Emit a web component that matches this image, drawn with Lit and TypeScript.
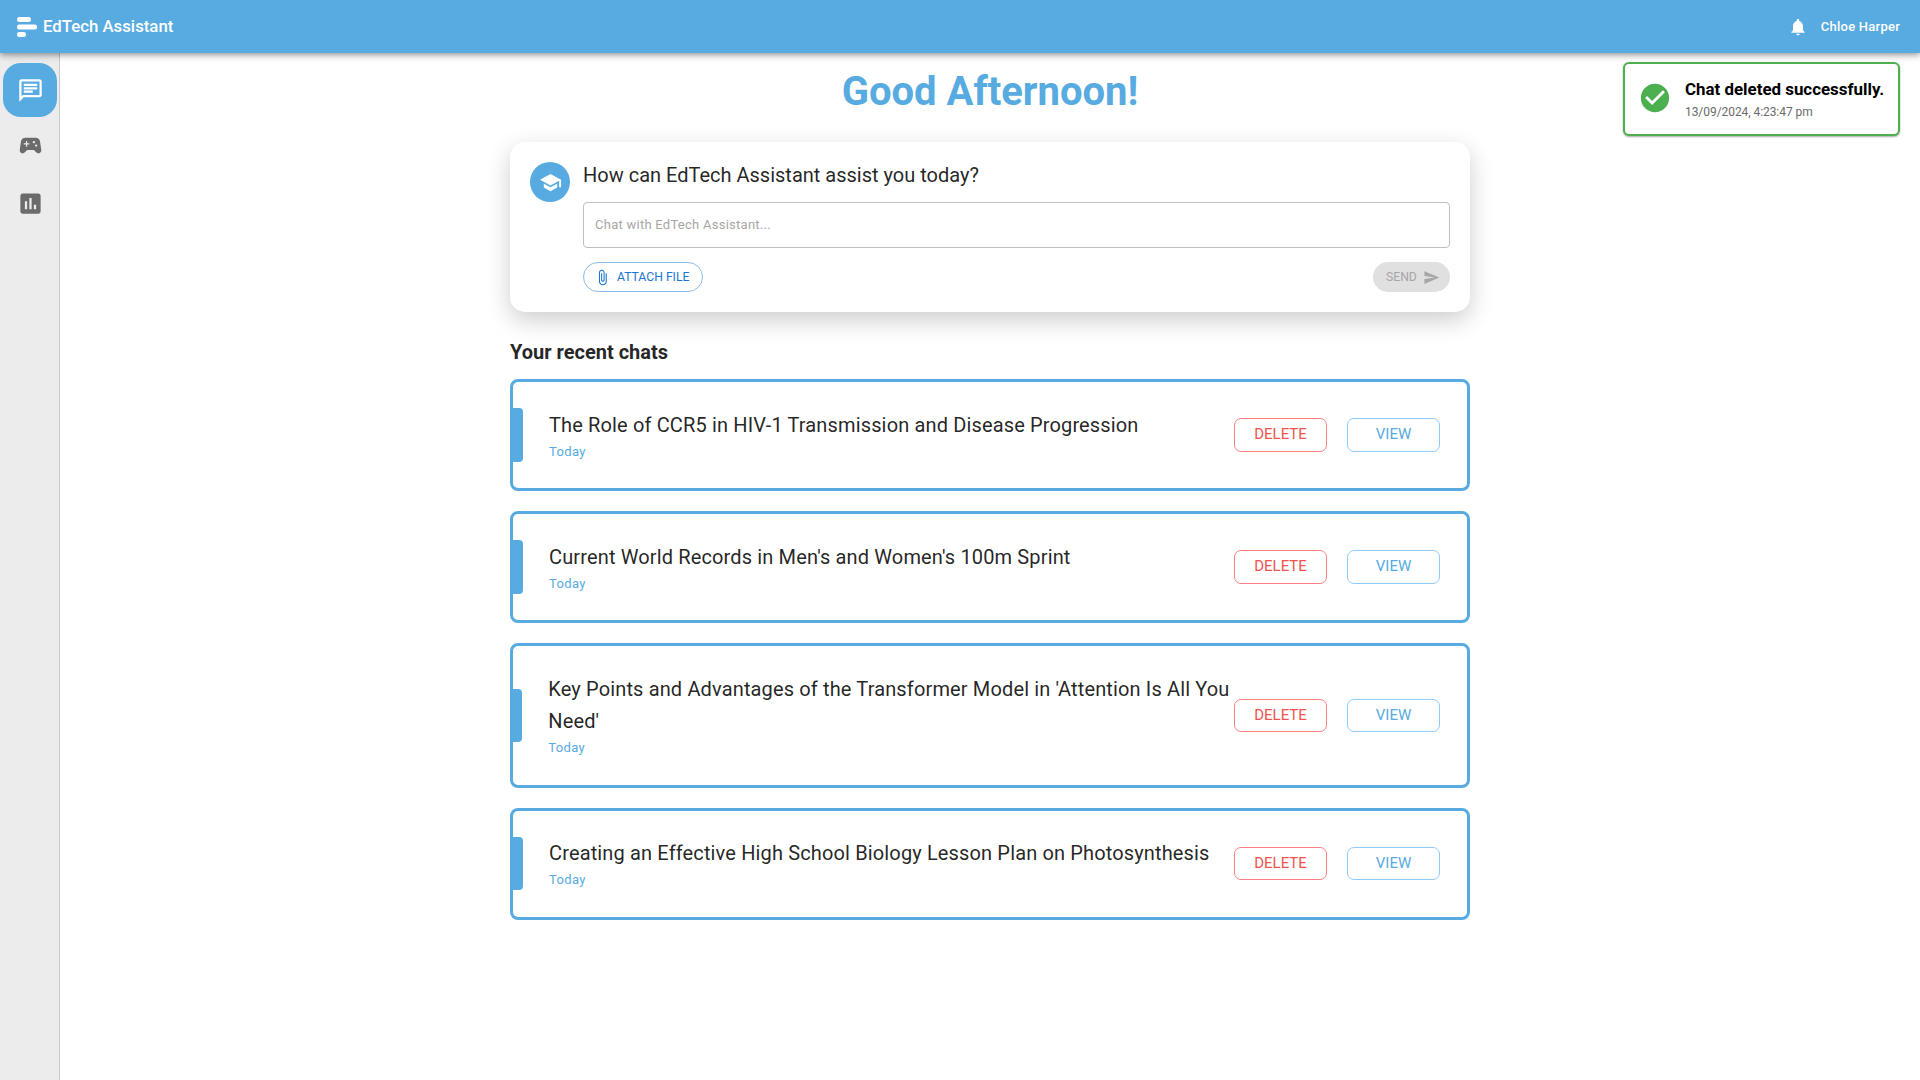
import { LitElement, html, css, svg } from "lit";
import { customElement, property } from "lit/decorators.js";

const icons = {
  chat: svg`<path d="M4 4h16v12H5.17L4 17.17V4m0-2c-1.1 0-1.99.9-1.99 2L2 22l4-4h14c1.1 0 2-.9 2-2V4c0-1.1-.9-2-2-2H4zm2 10h8v2H6v-2zm0-3h12v2H6V9zm0-3h12v2H6V6z"/>`,
  game: svg`<path d="m21.58 16.09-1.09-7.66C20.21 6.46 18.52 5 16.53 5H7.47C5.48 5 3.79 6.46 3.51 8.43l-1.09 7.66C2.2 17.63 3.39 19 4.94 19c.68 0 1.32-.27 1.8-.75L9 16h6l2.25 2.25c.48.48 1.13.75 1.8.75 1.56 0 2.75-1.37 2.53-2.91zM11 11H9v2H8v-2H6v-1h2V8h1v2h2v1zm4-1c-.55 0-1-.45-1-1s.45-1 1-1 1 .45 1 1-.45 1-1 1zm2 3c-.55 0-1-.45-1-1s.45-1 1-1 1 .45 1 1-.45 1-1 1z"/>`,
  stats: svg`<path d="M19 3H5c-1.1 0-2 .9-2 2v14c0 1.1.9 2 2 2h14c1.1 0 2-.9 2-2V5c0-1.1-.9-2-2-2zM9 17H7v-7h2v7zm4 0h-2V7h2v10zm4 0h-2v-4h2v4z"/>`,
  bell: svg`<path d="M12 22c1.1 0 2-.9 2-2h-4c0 1.1.89 2 2 2zm6-6v-5c0-3.07-1.64-5.64-4.5-6.32V4c0-.83-.67-1.5-1.5-1.5s-1.5.67-1.5 1.5v.68C7.63 5.36 6 7.92 6 11v5l-2 2v1h16v-1l-2-2z"/>`,
  check: svg`<path d="M12 2C6.48 2 2 6.48 2 12s4.48 10 10 10 10-4.48 10-10S17.52 2 12 2zm-2 15-5-5 1.41-1.41L10 14.17l7.59-7.59L19 8l-9 9z"/>`,
  school: svg`<path d="M5 13.18v4L12 21l7-3.82v-4L12 17l-7-3.82zM12 3 1 9l11 6 9-4.91V17h2V9L12 3z"/>`,
  clip: svg`<path d="M16.5 6v11.5c0 2.21-1.79 4-4 4s-4-1.79-4-4V5c0-1.38 1.12-2.5 2.5-2.5s2.5 1.12 2.5 2.5v10.5c0 .55-.45 1-1 1s-1-.45-1-1V6H10v9.5c0 1.38 1.12 2.5 2.5 2.5s2.5-1.12 2.5-2.5V5c0-2.21-1.79-4-4-4S7 2.79 7 5v12.5c0 3.04 2.46 5.5 5.5 5.5s5.5-2.46 5.5-5.5V6h-1.5z"/>`,
  send: svg`<path d="M2.01 21 23 12 2.01 3 2 10l15 2-15 2z"/>`,
};

const icon = (name: keyof typeof icons, cls: string) =>
  html`<svg class=${cls} viewBox="0 0 24 24" fill="currentColor" aria-hidden="true">${icons[name]}</svg>`;

@customElement("chat-card")
class ChatCard extends LitElement {
  @property() heading = "";
  @property() when = "";

  static styles = css`
    :host {
      display: flex;
      align-items: center;
      box-sizing: border-box;
      border: 3px solid #57abe0;
      border-radius: 8px;
      background: #fff;
      padding: 24px 27px 24px 0;
    }
    .accent { width: 10px; height: 53.6px; background: #57abe0; border-radius: 0 4px 4px 0; margin-right: 26px; }
    .text { flex: 1 1 auto; min-width: 0; }
    .title { font-size: 20px; line-height: 32px; letter-spacing: 0.14px; color: rgba(0, 0, 0, 0.87); margin-top: 2.85px; }
    .when { font-size: 13px; line-height: 20px; letter-spacing: 0.36px; color: #57abe0; margin: 1px 0 2.45px; }
    .actions { flex: none; display: flex; gap: 20px; }
    button {
      width: 93px;
      height: 33.6px;
      padding: 0 0 1.4px;
      border: 1px solid;
      border-radius: 7px;
      background: none;
      font: 400 15px/26px Roboto, sans-serif;
    }
    .delete { color: #ef5350; border-color: #ff7f7f; }
    .view { color: #57abe0; border-color: #90caf9; }
  `;

  render() {
    return html`
      <div class="accent"></div>
      <div class="text">
        <div class="title">${this.heading}</div>
        <div class="when">${this.when}</div>
      </div>
      <div class="actions">
        <button class="delete">DELETE</button>
        <button class="view">VIEW</button>
      </div>
    `;
  }
}

@customElement("app-root")
class AppRoot extends LitElement {
  static styles = css`
    :host {
      display: flex;
      flex-direction: column;
      height: 100vh;
      position: relative;
      overflow: hidden;
      background: #fff;
      font-family: Roboto, sans-serif;
      color: rgba(0, 0, 0, 0.87);
    }
    svg { display: block; flex: none; }
    header {
      flex: none;
      height: 53px;
      box-sizing: border-box;
      padding: 0 20px 0 17px;
      display: flex;
      align-items: center;
      background: #57abe0;
      color: #fff;
      z-index: 1;
      box-shadow: 0 2px 4px -1px rgba(0, 0, 0, 0.2), 0 4px 5px 0 rgba(0, 0, 0, 0.14), 0 1px 10px 0 rgba(0, 0, 0, 0.12);
    }
    .logo { width: 20px; height: 20px; margin-right: 6px; }
    .brand { font-size: 16.8px; line-height: 20px; font-weight: 500; flex: 1; padding-bottom: 2px; }
    .bell { width: 20px; height: 20px; margin-right: 13px; }
    .user { font-size: 13px; font-weight: 500; letter-spacing: 0.24px; }
    .body { flex: 1; display: flex; min-height: 0; }
    nav {
      flex: none;
      width: 60px;
      box-sizing: border-box;
      border-right: 1px solid #c9c9c9;
      background: #ececec;
      padding: 10px 0 0 3px;
      display: flex;
      flex-direction: column;
    }
    .item { width: 54px; height: 57.4px; box-sizing: border-box; padding-left: 1px; display: flex; align-items: center; justify-content: center; color: #6b6b6b; }
    .item.active { height: 54px; border-radius: 18px; background: #57abe0; color: #fff; }
    .nav-icon { width: 27px; height: 27px; }
    main { flex: 1; display: flex; justify-content: center; }
    .column { width: 960px; }
    h1 { margin: 15px 0 0; font-size: 40px; line-height: 48px; font-weight: 700; text-align: center; color: #57abe0; }
    .ask {
      margin-top: 26px;
      height: 170px;
      box-sizing: border-box;
      border-radius: 15px;
      padding: 20px;
      display: flex;
      background: #fff;
      box-shadow: 0 8px 24px rgba(0, 0, 0, 0.2);
    }
    .avatar { width: 40px; height: 40px; border-radius: 50%; background: #57abe0; color: #fff; display: flex; align-items: center; justify-content: center; margin-right: 13px; flex: none; }
    .cap { width: 23px; height: 23px; }
    .form { flex: 1; }
    .prompt { font-size: 20px; line-height: 26px; }
    .input {
      margin-top: 14px;
      height: 46px;
      box-sizing: border-box;
      border: 1px solid #bfbfbf;
      border-radius: 4px;
      padding: 0 11px 1px;
      display: flex;
      align-items: center;
      font-size: 13px;
      letter-spacing: 0.26px;
      color: #a6a6a6;
    }
    .row { margin-top: 14px; display: flex; justify-content: space-between; }
    .pill { height: 30px; box-sizing: border-box; border-radius: 15px; display: flex; align-items: center; font-size: 12.2px; }
    .attach { width: 120px; border: 1px solid #8cbbe9; color: #1976d2; padding-left: 10px; }
    .clip { width: 17px; height: 17px; margin-right: 6px; }
    .send { width: 77px; background: #e0e0e0; color: #a6a6a6; padding-left: 13px; }
    .plane { width: 17px; height: 17px; margin-left: 6px; }
    h2 { margin: 24px 0 10.7px; font-size: 20px; line-height: 32px; font-weight: 700; }
    .chats { display: flex; flex-direction: column; gap: 20px; }
    .toast {
      position: absolute;
      top: 62px;
      right: 20px;
      z-index: 2;
      width: 277px;
      height: 74px;
      box-sizing: border-box;
      border: 2px solid #4caf50;
      border-radius: 6px;
      padding-left: 13px;
      display: flex;
      align-items: center;
      background: #fff;
      box-shadow: 0 1px 2px rgba(0, 0, 0, 0.35);
    }
    .check { width: 34px; height: 34px; color: #4caf50; margin: 0 13px 2px 0; }
    .toast-title { font-size: 16.9px; line-height: 22px; font-weight: 700; color: #000; white-space: nowrap; padding-bottom: 3px; }
    .toast-time { font-size: 12px; line-height: 18px; letter-spacing: -0.06px; color: #6b6b6b; }
  `;

  private chats = [
    "The Role of CCR5 in HIV-1 Transmission and Disease Progression",
    "Current World Records in Men's and Women's 100m Sprint",
    "Key Points and Advantages of the Transformer Model in 'Attention Is All You Need'",
    "Creating an Effective High School Biology Lesson Plan on Photosynthesis",
  ];

  render() {
    return html`
      <header>
        <svg class="logo" viewBox="0 0 20 20" fill="#fff" aria-hidden="true">
          <rect x="0" y="0" width="14" height="5" rx="2.2" />
          <rect x="0" y="7.5" width="20" height="5" rx="2.2" />
          <rect x="0" y="15" width="9" height="5" rx="2.2" />
        </svg>
        <div class="brand">EdTech Assistant</div>
        ${icon("bell", "bell")}
        <div class="user">Chloe Harper</div>
      </header>
      <div class="body">
        <nav>
          <div class="item active">${icon("chat", "nav-icon")}</div>
          <div class="item">${icon("game", "nav-icon")}</div>
          <div class="item">${icon("stats", "nav-icon")}</div>
        </nav>
        <main>
          <div class="column">
            <h1>Good Afternoon!</h1>
            <section class="ask">
              <div class="avatar">${icon("school", "cap")}</div>
              <div class="form">
                <div class="prompt">How can EdTech Assistant assist you today?</div>
                <div class="input">Chat with EdTech Assistant...</div>
                <div class="row">
                  <div class="pill attach">${icon("clip", "clip")}ATTACH FILE</div>
                  <div class="pill send">SEND${icon("send", "plane")}</div>
                </div>
              </div>
            </section>
            <h2>Your recent chats</h2>
            <div class="chats">
              ${this.chats.map((c) => html`<chat-card .heading=${c} when="Today"></chat-card>`)}
            </div>
          </div>
        </main>
      </div>
      <div class="toast" role="status">
        ${icon("check", "check")}
        <div>
          <div class="toast-title">Chat deleted successfully.</div>
          <div class="toast-time">13/09/2024, 4:23:47 pm</div>
        </div>
      </div>
    `;
  }
}
